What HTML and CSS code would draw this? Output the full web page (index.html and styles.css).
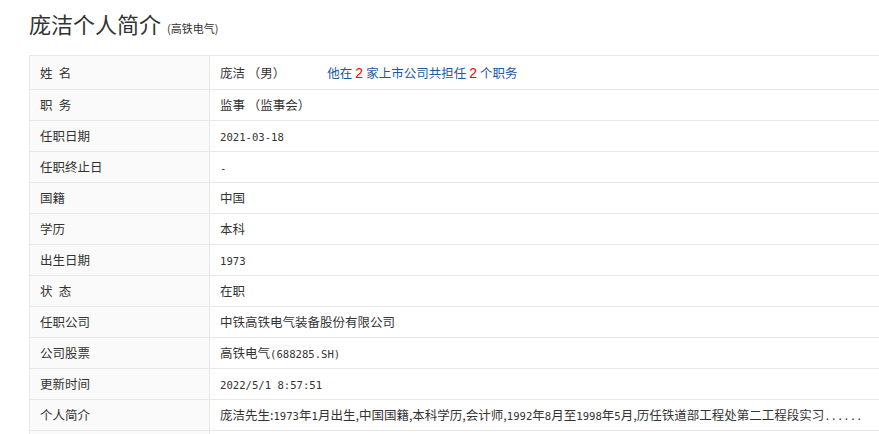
FILE: index.html
```html
<!DOCTYPE html>
<html lang="zh-CN">
<head>
<meta charset="utf-8">
<title>庞洁个人简介</title>
<link rel="stylesheet" href="styles.css">
</head>
<body>
<div class="page">
  <h1 class="title">庞洁个人简介<small class="sub">(高铁电气)</small></h1>
  <div class="table-wrap">
    <table class="info">
      <tr class="first">
        <td class="label">姓&ensp;名</td>
        <td class="value">庞洁 （男）<a class="link" href="#">他在<span class="red">2</span>家上市公司共担任<span class="red">2</span>个职务</a></td>
      </tr>
      <tr><td class="label">职&ensp;务</td><td class="value">监事 （监事会）</td></tr>
      <tr><td class="label">任职日期</td><td class="value"><span class="mono">2021-03-18</span></td></tr>
      <tr><td class="label">任职终止日</td><td class="value"><span class="mono">-</span></td></tr>
      <tr><td class="label">国籍</td><td class="value">中国</td></tr>
      <tr><td class="label">学历</td><td class="value">本科</td></tr>
      <tr><td class="label">出生日期</td><td class="value"><span class="mono">1973</span></td></tr>
      <tr><td class="label">状&ensp;态</td><td class="value">在职</td></tr>
      <tr><td class="label">任职公司</td><td class="value">中铁高铁电气装备股份有限公司</td></tr>
      <tr><td class="label">公司股票</td><td class="value">高铁电气<span class="mono">(688285.SH)</span></td></tr>
      <tr><td class="label">更新时间</td><td class="value"><span class="mono">2022/5/1 8:57:51</span></td></tr>
      <tr><td class="label">个人简介</td><td class="value">庞洁先生:<span class="mono">1973</span>年<span class="mono">1</span>月出生,中国国籍,本科学历,会计师,<span class="mono">1992</span>年<span class="mono">8</span>月至<span class="mono">1998</span>年<span class="mono">5</span>月,历任铁道部工程处第二工程段实习<span class="mono">......</span></td></tr>
      <tr><td class="label"></td><td class="value"></td></tr>
    </table>
  </div>
</div>
</body>
</html>
```
FILE: styles.css
```css
html, body {
  margin: 0;
  padding: 0;
  overflow: hidden;
  background: #fff;
}
body {
  font-family: "Noto Sans CJK SC", "Noto Sans", sans-serif;
  color: #333;
}
.page {
  padding: 8px 0 0 29px;
}
.title {
  margin: 0;
  font-size: 22px;
  font-weight: normal;
  line-height: 30px;
  height: 47px;
  color: #333;
}
.sub {
  font-size: 11px;
  margin-left: 6px;
  color: #333;
}
.table-wrap {
  overflow: hidden;
}
.info {
  border-collapse: collapse;
  width: 1000px;
  font-size: 12.5px;
}
.info td {
  border: 1px solid #e8e8e8;
  height: 30px;
  line-height: 16px;
  padding: 0 10px;
  white-space: nowrap;
  vertical-align: middle;
}
.info tr.first td {
  height: 33px;
}
.info td.label {
  width: 159px;
  background: #fafafa;
}
.info td.value {
  background: #fff;
}
.link {
  color: #1c57a2;
  text-decoration: none;
  margin-left: 42px;
}
.red {
  color: #f00;
  font-family: "Liberation Sans", sans-serif;
  font-size: 14px;
  line-height: 16px;
  margin: 0 3px;
}
.mono {
  font-family: "DejaVu Sans Mono", monospace;
  font-size: 10.6px;
  line-height: 16px;
}
```
